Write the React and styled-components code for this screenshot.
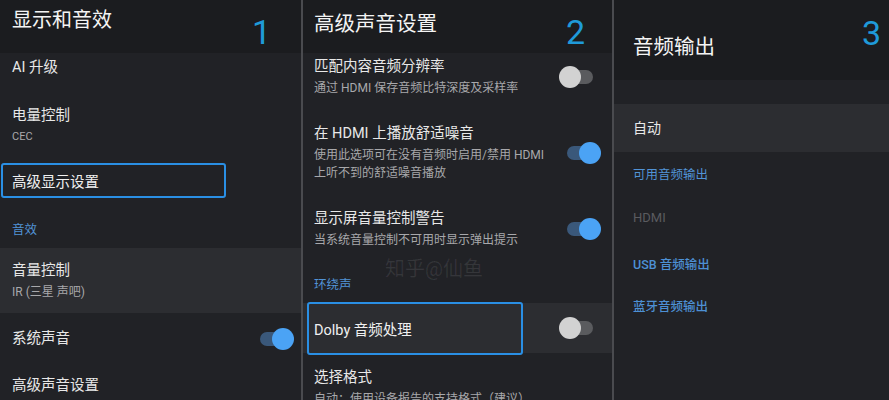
import styled, { createGlobalStyle } from "styled-components";

const GlobalStyle = createGlobalStyle`
  html, body {
    margin: 0;
    padding: 0;
    background: #212226;
  }
  body {
    font-family: Roboto, "Noto Sans CJK SC", sans-serif;
  }
`;

const Screen = styled.div`
  display: flex;
  width: 889px;
  height: 400px;
  overflow: hidden;
  background: #212226;
`;

const Panel = styled.section`
  --pad: ${(p) => p.$pad}px;
  --pr: ${(p) => p.$pr}px;
  position: relative;
  display: flex;
  flex-direction: column;
  flex: none;
  width: ${(p) => p.$w}px;
  background: #212226;
  overflow: hidden;
`;

const Divider = styled.div`
  flex: none;
  width: 2px;
  background: #4a4b4f;
`;

const Header = styled.header`
  display: flex;
  justify-content: space-between;
  align-items: flex-start;
  flex: none;
  box-sizing: border-box;
  height: ${(p) => p.$h}px;
  margin-bottom: ${(p) => p.$mb || 0}px;
  padding: 0 ${(p) => p.$numPad}px 0 var(--pad);
  background: #1b1c1f;
`;

const Title = styled.h1`
  margin: ${(p) => p.$top}px 0 0;
  font-size: ${(p) => p.$size}px;
  line-height: 24px;
  font-weight: 400;
  color: #f4f4f4;
  white-space: nowrap;
`;

const Step = styled.span`
  margin-top: ${(p) => p.$top}px;
  font-size: 34px;
  line-height: 35px;
  color: #1f9ad9;
`;

const Row = styled.div`
  display: flex;
  align-items: center;
  justify-content: space-between;
  flex: none;
  box-sizing: border-box;
  height: ${(p) => p.$h}px;
  padding: ${(p) => p.$pt || 0}px var(--pr) 0 ${(p) => (p.$flush ? "0" : "var(--pad)")};
  background: ${(p) => (p.$active ? "#2c2d31" : "transparent")};
`;

const TextBlock = styled.div`
  display: flex;
  flex-direction: column;
  min-width: 0;
`;

const Label = styled.div`
  font-size: ${(p) => p.$size || 14.5}px;
  line-height: 20px;
  color: #e8e8e8;
  white-space: nowrap;
`;

const Sub = styled.div`
  margin-top: 2px;
  font-size: ${(p) => p.$size || 12}px;
  line-height: 18px;
  color: #a8a8ab;
  white-space: nowrap;
`;

const Section = styled.div`
  display: flex;
  align-items: center;
  flex: none;
  box-sizing: border-box;
  height: ${(p) => p.$h}px;
  padding: ${(p) => p.$pt || 0}px 0 0 var(--pad);
  font-size: 12.5px;
  color: #5193d6;
`;

const Option = styled.div`
  display: flex;
  align-items: center;
  flex: none;
  height: ${(p) => p.$h}px;
  padding-left: var(--pad);
  font-size: ${(p) => (p.$muted ? 13 : 12.5)}px;
  font-weight: ${(p) => (p.$muted ? 400 : 500)};
  color: ${(p) => (p.$muted ? "#5a5b5f" : "#4d90d4")};
`;

const Focus = styled.div`
  display: flex;
  align-items: center;
  flex: none;
  box-sizing: border-box;
  width: ${(p) => p.$w}px;
  height: ${(p) => p.$h}px;
  margin-left: ${(p) => p.$ml}px;
  padding-left: ${(p) => p.$pl}px;
  border: 2px solid #2a8fe4;
  border-radius: 3px;
  font-size: 14.5px;
  color: #f0f0f0;
  white-space: nowrap;
`;

const SwitchBox = styled.span`
  position: relative;
  flex: none;
  width: 42px;
  height: 22px;
`;

const Track = styled.span`
  position: absolute;
  left: 8px;
  top: 4px;
  width: 26px;
  height: 14px;
  border-radius: 7px;
  background: ${(p) => (p.$on ? "#3a587a" : "#5a5b5e")};
`;

const Thumb = styled.span`
  position: absolute;
  top: 0;
  left: ${(p) => (p.$on ? 20 : 0)}px;
  width: 22px;
  height: 22px;
  border-radius: 50%;
  background: ${(p) => (p.$on ? "#4ba3f5" : "#d2d2d2")};
`;

const Watermark = styled.div`
  position: absolute;
  left: 82px;
  top: 256px;
  font-size: 20px;
  line-height: 26px;
  color: rgba(255, 255, 255, 0.09);
  pointer-events: none;
`;

const Toggle = ({ on }) => (
  <SwitchBox>
    <Track $on={on} />
    <Thumb $on={on} />
  </SwitchBox>
);

export default function App() {
  return (
    <>
      <GlobalStyle />
      <Screen>
        <Panel $w={301} $pad={12} $pr={7}>
          <Header $h={53} $numPad={30}>
            <Title $top={8} $size={20}>显示和音效</Title>
            <Step $top={15}>1</Step>
          </Header>
          <Row $h={29}>
            <Label>AI 升级</Label>
          </Row>
          <Row $h={81} $pt={6}>
            <TextBlock>
              <Label>电量控制</Label>
              <Sub $size={11}>CEC</Sub>
            </TextBlock>
          </Row>
          <Row $h={35} $flush>
            <Focus $w={225} $h={35} $ml={1} $pl={9}>高级显示设置</Focus>
          </Row>
          <Section $h={50} $pt={10}>音效</Section>
          <Row $h={65} $active>
            <TextBlock>
              <Label>音量控制</Label>
              <Sub>IR (三星 声吧)</Sub>
            </TextBlock>
          </Row>
          <Row $h={52}>
            <Label>系统声音</Label>
            <Toggle on />
          </Row>
          <Row $h={42}>
            <Label>高级声音设置</Label>
          </Row>
        </Panel>

        <Divider />

        <Panel $w={309} $pad={11} $pr={11}>
          <Header $h={53} $numPad={27}>
            <Title $top={12} $size={20.5}>高级声音设置</Title>
            <Step $top={15}>2</Step>
          </Header>
          <Row $h={47}>
            <TextBlock>
              <Label>匹配内容音频分辨率</Label>
              <Sub>通过 HDMI 保存音频比特深度及采样率</Sub>
            </TextBlock>
            <Toggle on={false} />
          </Row>
          <Row $h={106}>
            <TextBlock>
              <Label>在 HDMI 上播放舒适噪音</Label>
              <Sub>
                使用此选项可在没有音频时启用/禁用 HDMI
                <br />
                上听不到的舒适噪音播放
              </Sub>
            </TextBlock>
            <Toggle on />
          </Row>
          <Row $h={46}>
            <TextBlock>
              <Label>显示屏音量控制警告</Label>
              <Sub>当系统音量控制不可用时显示弹出提示</Sub>
            </TextBlock>
            <Toggle on />
          </Row>
          <Section $h={51} $pt={11}>环绕声</Section>
          <Row $h={50} $flush $active>
            <Focus $w={216} $h={53} $ml={4} $pl={5}>Dolby 音频处理</Focus>
            <Toggle on={false} />
          </Row>
          <Row $h={70}>
            <TextBlock>
              <Label>选择格式</Label>
              <Sub>自动：使用设备报告的支持格式（建议）</Sub>
            </TextBlock>
          </Row>
          <Watermark>知乎@仙鱼</Watermark>
        </Panel>

        <Divider />

        <Panel $w={275} $pad={19} $pr={10}>
          <Header $h={80} $mb={24} $numPad={8}>
            <Title $top={35} $size={20.5}>音频输出</Title>
            <Step $top={16}>3</Step>
          </Header>
          <Row $h={48} $active>
            <Label $size={14}>自动</Label>
          </Row>
          <Section $h={42}>可用音频输出</Section>
          <Option $h={46} $muted>HDMI</Option>
          <Option $h={46}>USB 音频输出</Option>
          <Option $h={38}>蓝牙音频输出</Option>
        </Panel>
      </Screen>
    </>
  );
}
